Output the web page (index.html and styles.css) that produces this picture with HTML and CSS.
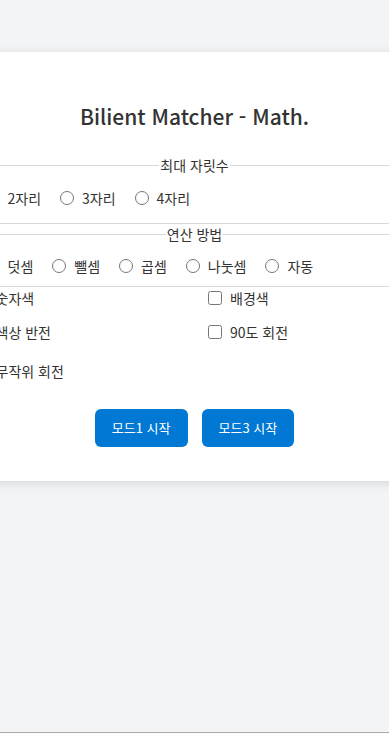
FILE: index.html
```html
<!DOCTYPE html>
<html lang="ko">
<head>
<meta charset="utf-8">
<title>Bilient Matcher - Math.</title>
<link rel="stylesheet" href="styles.css">
</head>
<body>
<div class="page">
  <main class="card">
    <h1 class="title">Bilient Matcher - Math.</h1>

    <fieldset class="group group-digits">
      <legend class="legend">최대 자릿수</legend>
      <div class="options">
        <label class="opt"><input type="radio" name="digits" checked>2자리</label>
        <label class="opt"><input type="radio" name="digits">3자리</label>
        <label class="opt"><input type="radio" name="digits">4자리</label>
      </div>
    </fieldset>

    <fieldset class="group group-ops">
      <legend class="legend">연산 방법</legend>
      <div class="options">
        <label class="opt"><input type="radio" name="op" checked>덧셈</label>
        <label class="opt"><input type="radio" name="op">뺄셈</label>
        <label class="opt"><input type="radio" name="op">곱셈</label>
        <label class="opt"><input type="radio" name="op">나눗셈</label>
        <label class="opt"><input type="radio" name="op">자동</label>
      </div>
    </fieldset>

    <div class="checks">
      <label class="chk"><input type="checkbox">숫자색</label>
      <label class="chk"><input type="checkbox">배경색</label>
      <label class="chk"><input type="checkbox">색상 반전</label>
      <label class="chk"><input type="checkbox">90도 회전</label>
      <label class="chk chk-last"><input type="checkbox">무작위 회전</label>
    </div>

    <div class="actions">
      <button class="btn" type="button">모드1 시작</button>
      <button class="btn" type="button">모드3 시작</button>
    </div>
  </main>
</div>
</body>
</html>
```
FILE: styles.css
```css
html, body {
  margin: 0;
  padding: 0;
}
body {
  background: #f3f4f6;
  font-family: "Noto Sans CJK KR", "Noto Sans", sans-serif;
  color: #333;
  overflow: hidden;
}
.page {
  box-sizing: border-box;
  min-height: 100vh;
  display: flex;
  justify-content: center;
  align-items: flex-start;
  padding-top: 52px;
  border-bottom: 1px solid #a9a9a9;
}
.card {
  flex: 0 0 auto;
  box-sizing: border-box;
  width: 500px;
  background: #fff;
  padding: 52px 24px 34px;
  box-shadow: 0 2px 10px rgba(0, 0, 0, 0.12);
}
.title {
  margin: 0 0 26px;
  text-align: center;
  font-size: 21px;
  font-weight: 500;
  line-height: 25px;
  color: #333;
}
.group {
  margin: 0 2px;
  padding: 12px 15px 14px;
  border: 0;
  border-top: 1px solid #d9d9d9;
  border-bottom: 1px solid #d9d9d9;
}
.group-ops {
  padding-top: 11px;
  padding-bottom: 9px;
}
.legend {
  margin: 0 auto;
  padding: 0 1px;
  font-size: 14px;
  line-height: 20px;
}
.options {
  display: flex;
  flex-wrap: wrap;
  column-gap: 19px;
}
.opt {
  display: flex;
  align-items: center;
  font-size: 14px;
  line-height: 22px;
}
.opt input {
  width: 14px;
  height: 14px;
  margin: 0 8px 0 0;
}
.checks {
  display: grid;
  grid-template-columns: 1fr 1fr;
  column-gap: 17px;
  row-gap: 12px;
}
.chk {
  display: flex;
  align-items: center;
  font-size: 14px;
  line-height: 22px;
}
.chk-last {
  margin-top: 5px;
}
.chk input {
  width: 14px;
  height: 14px;
  margin: 0 8px 0 5px;
}
.actions {
  display: flex;
  justify-content: center;
  gap: 14px;
  margin-top: 27px;
}
.btn {
  font-family: "Noto Sans CJK KR", "Noto Sans", sans-serif;
  font-size: 13px;
  line-height: 18px;
  white-space: nowrap;
  color: #fff;
  background: #0078d4;
  border: 0;
  border-radius: 6px;
  padding: 0 17px;
  height: 38px;
}
```
